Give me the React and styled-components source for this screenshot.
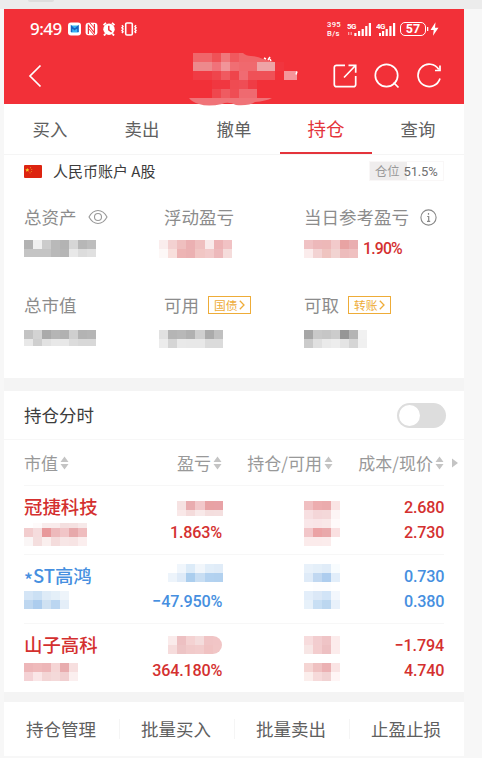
import React from "react";
import styled, { createGlobalStyle } from "styled-components";

const holdings = [
  {
    name: "冠捷科技",
    profit: "1.863%",
    cost: "2.680",
    price: "2.730",
    tone: "#d4302f",
    value: {
      top: 3,
      heights: [5, 9, 9],
      rows: [
        "- fefafa f9ecec f9ebeb f4dfdf f5e1e1 f7e9e9",
        "f2cdce f5dcdd e8999b edb9bb f1c5c7 e7a9ab efbcbe",
        "faf6f6 f4dede faefee f4dcdc f7e6e6 f7e4e4 fbeeee",
      ],
    },
    gain: {
      top: 6,
      heights: [9, 6],
      widths: [9, 9, 10, 9, 9],
      rows: [
        "f6e2e2 e9acaf f2c8ca e8a2a4 e8a2a6",
        "f9e8e8 f4dbdb f8e9e9 f4dede f4dfdf",
      ],
    },
    amount: {
      top: 6,
      rows: [
        "f0bfc1 edadaf ebabad fae4e4",
        "f7dfe1 f4d6d8 f4d8d9 fdf5f5",
        "f9e7e9 f9e5e7 f9e8e8 fffafa",
        "f2c6c9 eba3a5 e9a9ab fae0e1",
        "fbebeb fbebeb fbecec -",
      ],
    },
  },
  {
    name: "ST高鸿",
    starred: true,
    profit: "−47.950%",
    cost: "0.730",
    price: "0.380",
    tone: "#468fe0",
    value: {
      top: 2,
      rows: [
        "d4e5f6 cbe0f4 deebf7 e4eff8 eef4fa",
        "bed7f0 adcdee cfe1f2 bbd6f1 e4eef8",
      ],
    },
    gain: {
      top: 0,
      widths: [9, 9, 9, 10, 9, 9],
      rows: [
        "- f0f6fc dcebf8 f1f6fb e2eef9 e0ecf8",
        "edf4fb dfebf8 abceee c8def3 b3d2f0 b2d1ef",
      ],
    },
    amount: {
      top: 0,
      rows: [
        "e8f1fa e4eff9 e0ecf8 f8fcfe",
        "dfebf8 c1d8f1 aecdee e2eefa",
        "- fdfdfe fdfdfe -",
        "e3eefa dbe8f7 d2e4f7 f3f7fd",
        "e7f1fa c8dff4 bcd7f0 e8f1fb",
      ],
    },
  },
  {
    name: "山子高科",
    profit: "364.180%",
    cost: "−1.794",
    price: "4.740",
    tone: "#d4302f",
    value: {
      top: 5,
      rows: [
        "edb6b8 efbabb edb6b8 f5d5d5 e8acae f7dfdf",
        "f4d2d5 fae6e7 f3d5d5 f4d9d9 f1cfd0 fbefef",
      ],
    },
    gain: {
      top: 3,
      round: true,
      rows: [
        "faebeb edc0c2 f4d2d2 f4dcdc f0c4c5 f1c5c6",
        "f6dcdc edc4c5 f1caca f2cccc f0c2c2 f1c6c6",
      ],
    },
    amount: {
      top: 3,
      rows: [
        "f7dcdd f2cdcf efc4c6 fcecec",
        "f7e6e5 f3cdce edc0c2 fcecec",
        "- - - -",
        "f5d5d3 efc1c1 ebb1b3 fae4e4",
        "fbeeec f6dada f1d2d2 fff5f5",
      ],
    },
  },
];

const masks = {
  total: {
    heights: [9, 8],
    rows: [
      "b2b2b2 f0f0f0 cccccc b9b9b9 b3b3b3 d6d6d6 b7b7b7 bdbdbd",
      "c4c4c4 c4c4c4 c4c4c4 b9b9b9 b5b5b5 e8e8e8 dcdcdc e0e0e0",
    ],
  },
  floating: {
    widths: [9, 9, 9, 9, 10, 9, 9, 9],
    rows: [
      "faeded f3d1d1 efbfbf ebb0b2 efbfbf f9eaea edb3b5 f1c2c4",
      "fdf8f7 f8dfdc edb4b4 ebb1b2 f1c6c4 f2caca edb9bb f5dcdb",
    ],
  },
  today: {
    rows: [
      "f0c2c4 edb8ba edb8b8 f2cacb e8a3a3 e9aeb0",
      "fbecec f3d3d3 efc4c0 f1d3d1 edbcbc efc0c0",
    ],
  },
  market: {
    heights: [9, 7],
    rows: [
      "c3c3c3 d3d3d3 aaaaaa b5b5b5 b1b1b1 cfcfcf b3b3b3 b5b5b5",
      "e8e8e8 cfcfcf e2e2e2 e8e8e8 e8e8e8 dcdcdc d8d8d8 d8d8d8",
    ],
  },
  available: {
    widths: [9, 9, 9, 9, 10, 9, 9],
    rows: [
      "e1e1e1 b5b5b5 b8b8b8 b1b1b1 cfcfcf ababab c0c0c0",
      "ececec d5d5d5 e9e9e9 e8e8e8 e8e8e8 dbdbdb dbdbdb",
    ],
  },
  withdraw: {
    rows: [
      "a6a6a6 c9c9c9 c6c6c6 cccccc 969696 b4b4b4 f1f1f1",
      "cbcbcb e0e0e0 eaeaea ededed e4e4e4 d5d5d5 f0f0f0",
    ],
  },
};

const titleBlocks = [
  [193, 53, 19, 9, "#f0666a"],
  [212, 53, 9, 9, "#ef5257"],
  [221, 53, 9, 9, "#f0777b"],
  [230, 53, 9, 9, "#f0595e"],
  [193, 62, 19, 9, "#ed898c"],
  [212, 62, 9, 9, "#f0727a"],
  [221, 62, 9, 9, "#f19499"],
  [230, 62, 9, 9, "#f06e73"],
  [239, 62, 18, 9, "#f0696e"],
  [257, 62, 18, 9, "#eea3a6"],
  [275, 62, 9, 9, "#f1353e"],
  [193, 71, 19, 9, "#f03b44"],
  [212, 71, 9, 9, "#ef454c"],
  [221, 71, 9, 9, "#f05a60"],
  [230, 71, 9, 9, "#ef454c"],
  [239, 71, 9, 9, "#f06b72"],
  [248, 71, 27, 9, "#ef5157"],
  [284, 71, 13, 9, "#f5959a"],
  [212, 80, 18, 9, "#f03740"],
  [230, 80, 9, 9, "#ef4b52"],
  [239, 80, 9, 9, "#ef4d55"],
  [248, 80, 9, 9, "#ef3c45"],
  [212, 89, 9, 9, "#ef474e"],
  [221, 89, 9, 9, "#ef5b61"],
  [230, 89, 9, 9, "#ef4d54"],
  [239, 89, 18, 9, "#ef6a70"],
];

const Mosaic = ({ rows, widths = [], heights = [], top = 0, round }) => {
  const cells = [];
  let y = 0;
  let width = 0;
  rows.forEach((row, r) => {
    const h = heights[r] || 9;
    let x = 0;
    row.split(" ").forEach((color, c) => {
      const w = widths[c] || 9;
      if (color !== "-") {
        cells.push(
          <rect key={`${r}-${c}`} x={x} y={y} width={w} height={h} fill={`#${color}`} />
        );
      }
      x += w;
    });
    width = x;
    y += h;
  });
  return (
    <MosaicSvg width={width} height={y} $top={top} $round={round} shapeRendering="crispEdges">
      {cells}
    </MosaicSvg>
  );
};

const Sort = () => (
  <svg width="9" height="14" viewBox="0 0 9 14" fill="#c4c4c4">
    <path d="M4.5 .5L8.5 6H.5zM.5 8h8L4.5 13.5z" />
  </svg>
);

const Signal = ({ label, small }) => (
  <svg width={small ? 20 : 25} height="16" viewBox={small ? "0 0 20 16" : "0 0 25 16"}>
    <SignalText x="0" y="8">{label}</SignalText>
    <g fill="#fff">
      {small ? (
        <>
          <rect x="3" y="12" width="2" height="3" />
          <rect x="6" y="10" width="2.2" height="5" />
          <rect x="9.6" y="8" width="2.2" height="7" />
          <rect x="13.3" y="5" width="2.2" height="10" />
          <rect x="17" y="2" width="2.2" height="13" />
        </>
      ) : (
        <>
          <path d="M1 11h1.3v3H1zM3.6 11h1.3v3H3.6z" opacity=".55" />
          <rect x="7.3" y="12" width="2.2" height="3" />
          <rect x="11" y="10" width="2.2" height="5" />
          <rect x="14.6" y="8" width="2.2" height="7" />
          <rect x="18.2" y="5" width="2.2" height="10" />
          <rect x="21.8" y="2" width="2.2" height="13" />
        </>
      )}
    </g>
  </svg>
);

const StatusIcons = () => (
  <svg width="70" height="14" viewBox="0 0 70 14">
    <rect x="0" y=".5" width="13" height="13" rx="3" fill="#fff" />
    <path d="M3 3.5h7.5v7H3z" fill="#36b4f5" />
    <path d="M3.5 10V4.5l3 3 3.5-3V10" fill="none" stroke="#1762c4" strokeWidth="1.5" />
    <rect x="17.6" y=".8" width="11.8" height="12.4" rx="3" fill="#fff" />
    <path d="M20.4 12V3.2l6 7.6V2" fill="none" stroke="#f23038" strokeWidth="1.2" />
    <path d="M20.4 6.4l6 7M21.6 .6l4.8 5.6" stroke="#f23038" strokeWidth="1" />
    <circle cx="41" cy="7.3" r="5.7" fill="#fff" />
    <path d="M35.5 3.2L38 .9M46.5 3.2L44 .9M37.5 12l-1.6 1.5M44.5 12l1.6 1.5" stroke="#fff" strokeWidth="1.8" />
    <path d="M40.8 3.8v4l2.8 2" fill="none" stroke="#f23038" strokeWidth="1.5" />
    <rect x="57.7" y="1" width="6.6" height="12" rx="1.3" fill="none" stroke="#fff" strokeWidth="1.6" />
    <path
      d="M54 3.2l1 1.3-1 1.3 1 1.3-1 1.3 1 1.3-1 1.3M68 3.2l-1 1.3 1 1.3-1 1.3 1 1.3-1 1.3 1 1.3"
      fill="none"
      stroke="#fff"
      strokeWidth="1.5"
    />
  </svg>
);

const Title = () => (
  <TitleSvg width="130" height="62" viewBox="180 46 130 62">
    <g shapeRendering="crispEdges">
      {titleBlocks.map(([x, y, w, h, fill]) => (
        <rect key={`${x}-${y}`} x={x} y={y} width={w} height={h} fill={fill} />
      ))}
    </g>
    <path d="M239 53h4q3 3 8 3q6 0 12 3l11 3h-35z" fill="#f0666a" />
    <path d="M189 98h83q-6 3-17 4q-6 4-19 3q-8-4-14-1q-14 3-23 0q-7-2-10-6z" fill="#f07378" />
    <path d="M264 58l2 1M268 60l2-3M270 59l1 2M297 71.5l-1 3" stroke="#fff" strokeWidth="1.5" />
  </TitleSvg>
);

const Label = ({ children, extra }) => (
  <LabelRow>
    <span>{children}</span>
    {extra}
  </LabelRow>
);

const LinkTag = ({ children }) => (
  <Tag>
    <span>{children}</span>
    <svg width="6" height="10" viewBox="0 0 6 10" fill="none" stroke="#eeac38" strokeWidth="1.3">
      <path d="M.8 .8L5 5 .8 9.2" />
    </svg>
  </Tag>
);

const App = () => {
  return (
    <Page>
      <GlobalStyle />
      <Handle />
      <Phone>
        <Header>
          <StatusBar>
            <Clock>9:49</Clock>
            <StatusIcons />
            <StatusRight>
              <Speed>
                <span>395</span>
                <span>B/s</span>
              </Speed>
              <Signal label="5G" />
              <Signal label="4G" small />
              <Battery>57</Battery>
              <svg width="12" height="14" viewBox="0 0 12 14" fill="#fff">
                <path d="M0 5h1.3v4H0zM8.5 .3L3.5 8h3.2l-.7 5.7L11.5 5.8H8z" />
              </svg>
            </StatusRight>
          </StatusBar>
          <NavBar>
            <svg width="14" height="24" viewBox="0 0 14 24" fill="none" stroke="#fff" strokeWidth="1.7">
              <path d="M12.5 1.5L2 12l10.5 10.5" />
            </svg>
            <NavIcons>
              <svg width="24" height="24" viewBox="0 0 24 24" fill="none" stroke="#fff" strokeWidth="1.7">
                <path d="M12 1.3H3.5a2.2 2.2 0 0 0-2.2 2.2v17a2.2 2.2 0 0 0 2.2 2.2h17a2.2 2.2 0 0 0 2.2-2.2V12M15.5 1.3h7.2v7.5M22.5 1.5L11 13.5" />
              </svg>
              <svg width="26" height="26" viewBox="0 0 26 26" fill="none" stroke="#fff" strokeWidth="1.7">
                <circle cx="12.5" cy="12.5" r="11.2" />
                <path d="M19.5 19.5l5 5" />
              </svg>
              <svg width="25" height="26" viewBox="0 0 25 26" fill="none" stroke="#fff" strokeWidth="1.7">
                <path d="M21.8 6.5A11.2 11.2 0 1 0 23 15.5" />
                <path d="M23 2.5v5h-5" />
              </svg>
            </NavIcons>
          </NavBar>
          <Title />
        </Header>

        <Tabs>
          <Tab>买入</Tab>
          <Tab>卖出</Tab>
          <Tab>撤单</Tab>
          <Tab $active>持仓</Tab>
          <Tab>查询</Tab>
        </Tabs>

        <Account>
          <svg width="18" height="13" viewBox="0 0 18 13">
            <rect width="18" height="13" rx="1" fill="#dd2410" />
            <path d="M3.3 3l.6 1.3 1.4.1-1 1 .3 1.4-1.3-.7-1.2.7.2-1.4-1-1 1.4-.1z" fill="#f6c52c" />
            <g fill="#e98a20">
              <circle cx="6.5" cy="2.7" r=".6" />
              <circle cx="7.7" cy="4.5" r=".6" />
              <circle cx="7.5" cy="6.5" r=".6" />
              <circle cx="6" cy="7.8" r=".6" />
            </g>
          </svg>
          <AccountName>人民币账户 A股</AccountName>
          <Position>
            <span>仓位</span>
            <b>51.5%</b>
          </Position>
        </Account>

        <Assets>
          <Asset>
            <Label
              extra={
                <svg width="20" height="16" viewBox="0 0 20 16" fill="none" stroke="#999" strokeWidth="1.1">
                  <path d="M1 8Q4.5 1.5 10 1.5T19 8Q15.5 14.5 10 14.5T1 8z" />
                  <circle cx="10" cy="8" r="3.5" />
                </svg>
              }
            >
              总资产
            </Label>
            <Mosaic {...masks.total} />
          </Asset>
          <Asset>
            <Label>浮动盈亏</Label>
            <Masked>
              <Mosaic {...masks.floating} />
            </Masked>
          </Asset>
          <Asset>
            <Label
              extra={
                <svg width="17" height="17" viewBox="0 0 17 17" fill="none" stroke="#888" strokeWidth="1.1">
                  <circle cx="8.5" cy="8.5" r="7.6" />
                  <path d="M8.5 4v1.700M7.200 7.500h1.500v4.800M7 12.300h3.200" strokeWidth="1.2" />
                </svg>
              }
            >
              当日参考盈亏
            </Label>
            <ValueRow>
              <Mosaic {...masks.today} />
              <Percent>1.90%</Percent>
            </ValueRow>
          </Asset>
          <Asset $raised>
            <Label>总市值</Label>
            <Mosaic {...masks.market} top={2} />
          </Asset>
          <Asset $raised>
            <Label extra={<LinkTag>国债</LinkTag>}>可用</Label>
            <Masked>
              <Mosaic {...masks.available} top={2} />
            </Masked>
          </Asset>
          <Asset $raised>
            <Label extra={<LinkTag>转账</LinkTag>}>可取</Label>
            <Mosaic {...masks.withdraw} top={2} />
          </Asset>
        </Assets>

        <Section>
          <SectionHead>
            <span>持仓分时</span>
            <Toggle />
          </SectionHead>
          <Columns>
            <Column>市值<Sort /></Column>
            <Column $right>盈亏<Sort /></Column>
            <Column $right $inset>持仓/可用<Sort /></Column>
            <Column $right>成本/现价<Sort /></Column>
            <More width="6" height="10" viewBox="0 0 6 10" fill="#c4c4c4">
              <path d="M0 .5L6 5 0 9.5z" />
            </More>
          </Columns>
          {holdings.map((item) => (
            <Holding key={item.name} $tone={item.tone}>
              <Cell>
                <Line>
                  <Name>
                    {item.starred && <Star>*</Star>}
                    {item.name}
                  </Name>
                </Line>
                <Line><Mosaic {...item.value} /></Line>
              </Cell>
              <Cell $right>
                <Line $shift={item.gain.round ? 0 : 1}><Mosaic {...item.gain} /></Line>
                <Line><Figure>{item.profit}</Figure></Line>
              </Cell>
              <Cell $right>
                <Mosaic {...item.amount} />
              </Cell>
              <Cell $right>
                <Line><Figure>{item.cost}</Figure></Line>
                <Line><Figure>{item.price}</Figure></Line>
              </Cell>
            </Holding>
          ))}
        </Section>

        <Actions>
          <Action>持仓管理</Action>
          <Action>批量买入</Action>
          <Action>批量卖出</Action>
          <Action>止盈止损</Action>
        </Actions>
      </Phone>
    </Page>
  );
};

const GlobalStyle = createGlobalStyle`
  * {
    box-sizing: border-box;
  }

  body {
    margin: 0;
    background: #f7f7f7;
    font-family: "Noto Sans CJK SC", sans-serif;
  }

  svg {
    display: block;
    flex-shrink: 0;
  }
`;

const Page = styled.div`
  width: 482px;
  height: 758px;
  overflow: hidden;
  background: #f7f7f7;
`;

const Handle = styled.div`
  height: 9px;
  background: #ececec;

  &::before {
    content: "";
    display: block;
    width: 26px;
    height: 2px;
    margin-left: 28px;
    border-radius: 0 0 2px 2px;
    background: #dedede;
  }
`;

const Phone = styled.div`
  width: 460px;
  margin-left: 4px;
  background: #f4f4f4;
`;

const Header = styled.div`
  position: relative;
  height: 95px;
  background: #f23038;
  color: #fff;
`;

const StatusBar = styled.div`
  display: flex;
  align-items: center;
  height: 39px;
  padding: 0 25px 0 26px;
`;

const Clock = styled.span`
  width: 38px;
  font: 500 17px/20px "Noto Sans", sans-serif;
  letter-spacing: -0.5px;
`;

const StatusRight = styled.div`
  display: flex;
  align-items: center;
  margin-left: auto;
  gap: 4px;
`;

const Speed = styled.div`
  display: flex;
  flex-direction: column;
  width: 16px;
  font: 500 7.7px/9px Roboto, sans-serif;
  letter-spacing: 0.3px;
`;

const SignalText = styled.text`
  fill: #fff;
  font: 700 8px Roboto, sans-serif;
  letter-spacing: -0.5px;
`;

const Battery = styled.span`
  width: 26px;
  height: 14px;
  margin: 0 -3px 0 0;
  border: 1px solid #fff;
  border-radius: 5px;
  font: 700 12.5px/12px Roboto, sans-serif;
  text-align: center;
`;

const NavBar = styled.div`
  display: flex;
  align-items: center;
  justify-content: space-between;
  height: 56px;
  padding: 0 22px 0 24px;
`;

const NavIcons = styled.div`
  display: flex;
  align-items: center;
  gap: 17px;
`;

const TitleSvg = styled.svg`
  position: absolute;
  top: 37px;
  left: 176px;
`;

const Tabs = styled.div`
  display: grid;
  grid-template-columns: repeat(5, 1fr);
  height: 51px;
  background: #fff;
  border-bottom: 1px solid #f5f5f5;
`;

const Tab = styled.div`
  height: 50px;
  color: ${(props) => (props.$active ? "#e4343b" : "#606060")};
  font-size: ${(props) => (props.$active ? "18.5px" : "17.4px")};
  line-height: 49px;
  text-align: center;
  border-bottom: 2px solid ${(props) => (props.$active ? "#e4343b" : "transparent")};
`;

const Account = styled.div`
  display: flex;
  align-items: center;
  height: 32px;
  padding: 0 20px;
  background: #fff;
`;

const AccountName = styled.span`
  margin-left: 11px;
  color: #3c3c3c;
  font-size: 15px;
  line-height: 20px;
`;

const Position = styled.div`
  display: flex;
  align-items: center;
  gap: 4px;
  width: 75px;
  height: 20px;
  margin-left: auto;
  padding-left: 5px;
  background: linear-gradient(90deg, #efeded 37px, #fff 37px);
  border: 1px solid #f9f7f7;
  color: #999;
  font-size: 12.3px;

  b {
    color: #707070;
    font: 400 13px Roboto, sans-serif;
    letter-spacing: -0.2px;
  }
`;

const Assets = styled.div`
  display: grid;
  grid-template-columns: 140px 140px 1fr;
  grid-template-rows: 89px 1fr;
  height: 191px;
  margin-bottom: 13px;
  padding: 18px 0 0 20px;
  background: #fff;
`;

const Asset = styled.div`
  display: flex;
  flex-direction: column;
  gap: 11px;
  margin-top: ${(props) => (props.$raised ? "-1px" : "0")};
`;

const LabelRow = styled.div`
  display: flex;
  align-items: center;
  height: 24px;
  gap: 11px;
  color: #8c8c8c;
  font-size: 17.5px;
  line-height: 24px;
`;

const Tag = styled.span`
  display: flex;
  align-items: center;
  justify-content: space-between;
  width: 43px;
  height: 18px;
  padding: 0 5px;
  margin-left: -2px;
  border: 1.5px solid #eeac38;
  color: #eeac38;
  font-size: 11.8px;

  span {
    height: 16px;
    line-height: 15px;
  }
`;

const Masked = styled.div`
  margin-left: -5px;
`;

const ValueRow = styled.div`
  display: flex;
  align-items: center;
  gap: 5px;
  height: 18px;
`;

const Percent = styled.span`
  color: #d4302f;
  font: 500 15.8px/18px Roboto, sans-serif;
  letter-spacing: -0.8px;
`;

const MosaicSvg = styled.svg`
  margin-top: ${(props) => props.$top}px;
  border-radius: ${(props) => (props.$round ? "0 9px 9px 0" : "0")};
`;

const Section = styled.div`
  height: 301px;
  margin-bottom: 10px;
  background: #fff;
`;

const SectionHead = styled.div`
  display: flex;
  align-items: center;
  justify-content: space-between;
  height: 49px;
  padding: 0 18px 0 20px;
  border-bottom: 1px solid #f7f7f7;
  color: #3c3c3c;
  font-size: 17.5px;

  span {
    height: 26px;
    line-height: 26px;
  }
`;

const Toggle = styled.div`
  width: 49px;
  height: 25px;
  padding: 2px;
  border-radius: 13px;
  background: #ddd;

  &::before {
    content: "";
    display: block;
    width: 21px;
    height: 21px;
    border-radius: 50%;
    background: #fff;
  }
`;

const Columns = styled.div`
  display: grid;
  grid-template-columns: 118px 80px 118px 104px 20px;
  align-items: center;
  height: 45px;
  margin-left: 20px;
`;

const Column = styled.div`
  display: flex;
  align-items: center;
  justify-content: ${(props) => (props.$right ? "flex-end" : "flex-start")};
  gap: 2px;
  padding-right: ${(props) => (props.$inset ? "7px" : "0")};
  color: #999;
  font-size: 17px;
  line-height: 24px;
  white-space: nowrap;
`;

const More = styled.svg`
  margin-left: 8px;
`;

const Holding = styled.div`
  display: grid;
  grid-template-columns: 118px 80px 118px 104px;
  width: 420px;
  height: 69px;
  margin-left: 20px;
  padding-top: 9px;
  border-top: 1px solid #f7f7f7;
  color: ${(props) => props.$tone};
`;

const Cell = styled.div`
  display: flex;
  flex-direction: column;
  align-items: ${(props) => (props.$right ? "flex-end" : "flex-start")};
`;

const Line = styled.div`
  height: 25px;
  margin-right: ${(props) => (props.$shift ? "-1px" : "0")};
  line-height: 25px;
  white-space: nowrap;
`;

const Figure = styled.span`
  display: block;
  font: 500 17.4px/25px Roboto, sans-serif;
  letter-spacing: -0.2px;
  transform: scaleX(0.93);
  transform-origin: right;
`;

const Name = styled.span`
  display: block;
  font-size: 18.4px;
  font-weight: 500;
  line-height: 22px;
`;

const Star = styled.span`
  display: inline-block;
  height: 18px;
  line-height: 24px;
  vertical-align: -4px;
`;

const Actions = styled.div`
  display: grid;
  grid-template-columns: repeat(4, 115px);
  align-items: center;
  height: 54px;
  background: #fff;
`;

const Action = styled.div`
  padding-right: 1px;
  color: #606060;
  font-size: 17.5px;
  line-height: 20px;
  text-align: center;

  & + & {
    border-left: 1px solid #f5f5f5;
    padding-right: 2px;
  }
`;

export default App;
